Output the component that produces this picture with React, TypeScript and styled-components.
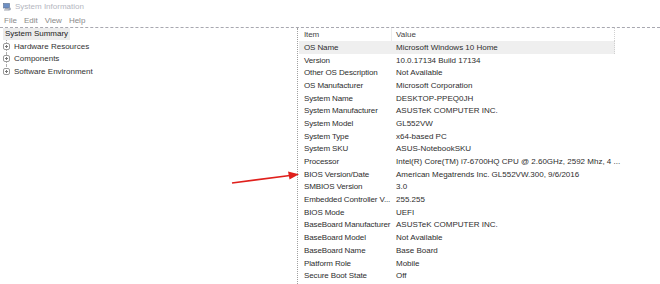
import React from "react";
import styled, { createGlobalStyle } from "styled-components";

const Global = createGlobalStyle`
  html, body {
    margin: 0;
    padding: 0;
    background: #fff;
  }
  body {
    font-family: "Liberation Sans", Arial, sans-serif;
  }
`;

const Window = styled.div`
  position: relative;
  width: 660px;
  height: 284px;
  overflow: hidden;
  display: flex;
  flex-direction: column;
  background: #fff;
  font-size: 8px;
  color: #2e2e2e;
`;

const TitleBar = styled.div`
  height: 13px;
  display: flex;
  align-items: center;
  gap: 4px;
  padding-left: 3px;
  color: #b4b6c0;
  font-size: 8px;
`;

const MenuBar = styled.div`
  height: 14px;
  display: flex;
  align-items: center;
  gap: 7px;
  padding-left: 4px;
  color: #8a8a8a;
  font-size: 8px;
`;

const Content = styled.div`
  flex: 1;
  display: flex;
  border-top: 1px dashed #a8a8b0;
  min-height: 0;
`;

const TreePane = styled.div`
  width: 297px;
  border-right: 1px dotted #a0a0a0;
  display: flex;
  flex-direction: column;
`;

const TreeRoot = styled.div`
  align-self: flex-start;
  margin-left: 3px;
  padding: 0 2px;
  height: 12px;
  line-height: 12px;
  background: #ececec;
  color: #222;
`;

const TreeItem = styled.div`
  position: relative;
  display: flex;
  align-items: center;
  gap: 4px;
  height: 12.5px;
  padding-left: 3px;
  color: #333;
  &::before {
    content: "";
    position: absolute;
    left: 6px;
    top: 0;
    bottom: 0;
    border-left: 1px dotted #b0b0b0;
  }
  &:last-child::before {
    bottom: 50%;
  }
`;

const Expander = styled.span`
  width: 5px;
  height: 5px;
  border: 1px solid #9a9a9a;
  border-radius: 2px;
  background: #fff;
  position: relative;
  z-index: 1;
  flex: none;
  &::before {
    content: "";
    position: absolute;
    left: 1px;
    right: 1px;
    top: 2px;
    height: 1px;
    background: #777;
  }
  &::after {
    content: "";
    position: absolute;
    top: 1px;
    bottom: 1px;
    left: 2px;
    width: 1px;
    background: #777;
  }
`;

const ListPane = styled.div`
  flex: 1;
  padding-left: 1px;
`;

const Table = styled.div`
  width: 316px;
  display: flex;
  flex-direction: column;
`;

const Row = styled.div<{ $hl?: boolean; $head?: boolean }>`
  display: grid;
  grid-template-columns: 93px 1fr;
  height: ${(p) => (p.$head ? "13px" : "12.7px")};
  align-items: center;
  background: ${(p) => (p.$hl ? "#efefef" : "transparent")};
  border-right: ${(p) => (p.$head || p.$hl ? "1px dotted #d0d0d0" : "1px solid transparent")};
  white-space: nowrap;
`;

const Cell = styled.div<{ $head?: boolean }>`
  padding-left: 5px;
  overflow: hidden;
  letter-spacing: -0.12px;
  color: ${(p) => (p.$head ? "#444" : "#2e2e2e")};
  border-right: ${(p) => (p.$head ? "1px solid #ececec" : "none")};
  height: 100%;
  display: flex;
  align-items: center;
`;

const ValueCell = styled(Cell)`
  padding-left: 4px;
  letter-spacing: 0;
  overflow: visible;
  border-right: none;
`;

const Arrow = styled.svg`
  position: absolute;
  left: 228px;
  top: 168px;
`;

const rows: [string, string][] = [
  ["OS Name", "Microsoft Windows 10 Home"],
  ["Version", "10.0.17134 Build 17134"],
  ["Other OS Description", "Not Available"],
  ["OS Manufacturer", "Microsoft Corporation"],
  ["System Name", "DESKTOP-PPEQ0JH"],
  ["System Manufacturer", "ASUSTeK COMPUTER INC."],
  ["System Model", "GL552VW"],
  ["System Type", "x64-based PC"],
  ["System SKU", "ASUS-NotebookSKU"],
  ["Processor", "Intel(R) Core(TM) i7-6700HQ CPU @ 2.60GHz, 2592 Mhz, 4 ..."],
  ["BIOS Version/Date", "American Megatrends Inc. GL552VW.300, 9/6/2016"],
  ["SMBIOS Version", "3.0"],
  ["Embedded Controller V...", "255.255"],
  ["BIOS Mode", "UEFI"],
  ["BaseBoard Manufacturer", "ASUSTeK COMPUTER INC."],
  ["BaseBoard Model", "Not Available"],
  ["BaseBoard Name", "Base Board"],
  ["Platform Role", "Mobile"],
  ["Secure Boot State", "Off"],
];

function AppIcon() {
  return (
    <svg width="8" height="8" viewBox="0 0 8 8">
      <rect x="0.5" y="0.5" width="6" height="4.5" fill="#6d8fc4" stroke="#5a6e90" strokeWidth="0.6" />
      <rect x="2" y="5.3" width="3" height="1" fill="#8a8f9a" />
      <rect x="1" y="6.5" width="5" height="1" fill="#a0a4ad" />
      <circle cx="6.5" cy="6" r="1.4" fill="#9aa3b5" />
    </svg>
  );
}

export default function App() {
  return (
    <Window>
      <Global />
      <TitleBar>
        <AppIcon />
        <span>System Information</span>
      </TitleBar>
      <MenuBar>
        <span>File</span>
        <span>Edit</span>
        <span>View</span>
        <span>Help</span>
      </MenuBar>
      <Content>
        <TreePane>
          <TreeRoot>System Summary</TreeRoot>
          <TreeItem>
            <Expander />
            Hardware Resources
          </TreeItem>
          <TreeItem>
            <Expander />
            Components
          </TreeItem>
          <TreeItem>
            <Expander />
            Software Environment
          </TreeItem>
        </TreePane>
        <ListPane>
          <Table>
            <Row $head>
              <Cell $head>Item</Cell>
              <ValueCell $head>Value</ValueCell>
            </Row>
            {rows.map(([item, value], i) => (
              <Row key={item} $hl={i === 0}>
                <Cell>{item}</Cell>
                <ValueCell>{value}</ValueCell>
              </Row>
            ))}
          </Table>
        </ListPane>
      </Content>
      <Arrow width="74" height="20" viewBox="0 0 74 20">
        <line x1="4" y1="15" x2="62" y2="7.5" stroke="#e0201c" strokeWidth="1.6" />
        <polygon points="71,6.3 60,3.5 61.5,11.5" fill="#e0201c" />
      </Arrow>
    </Window>
  );
}
